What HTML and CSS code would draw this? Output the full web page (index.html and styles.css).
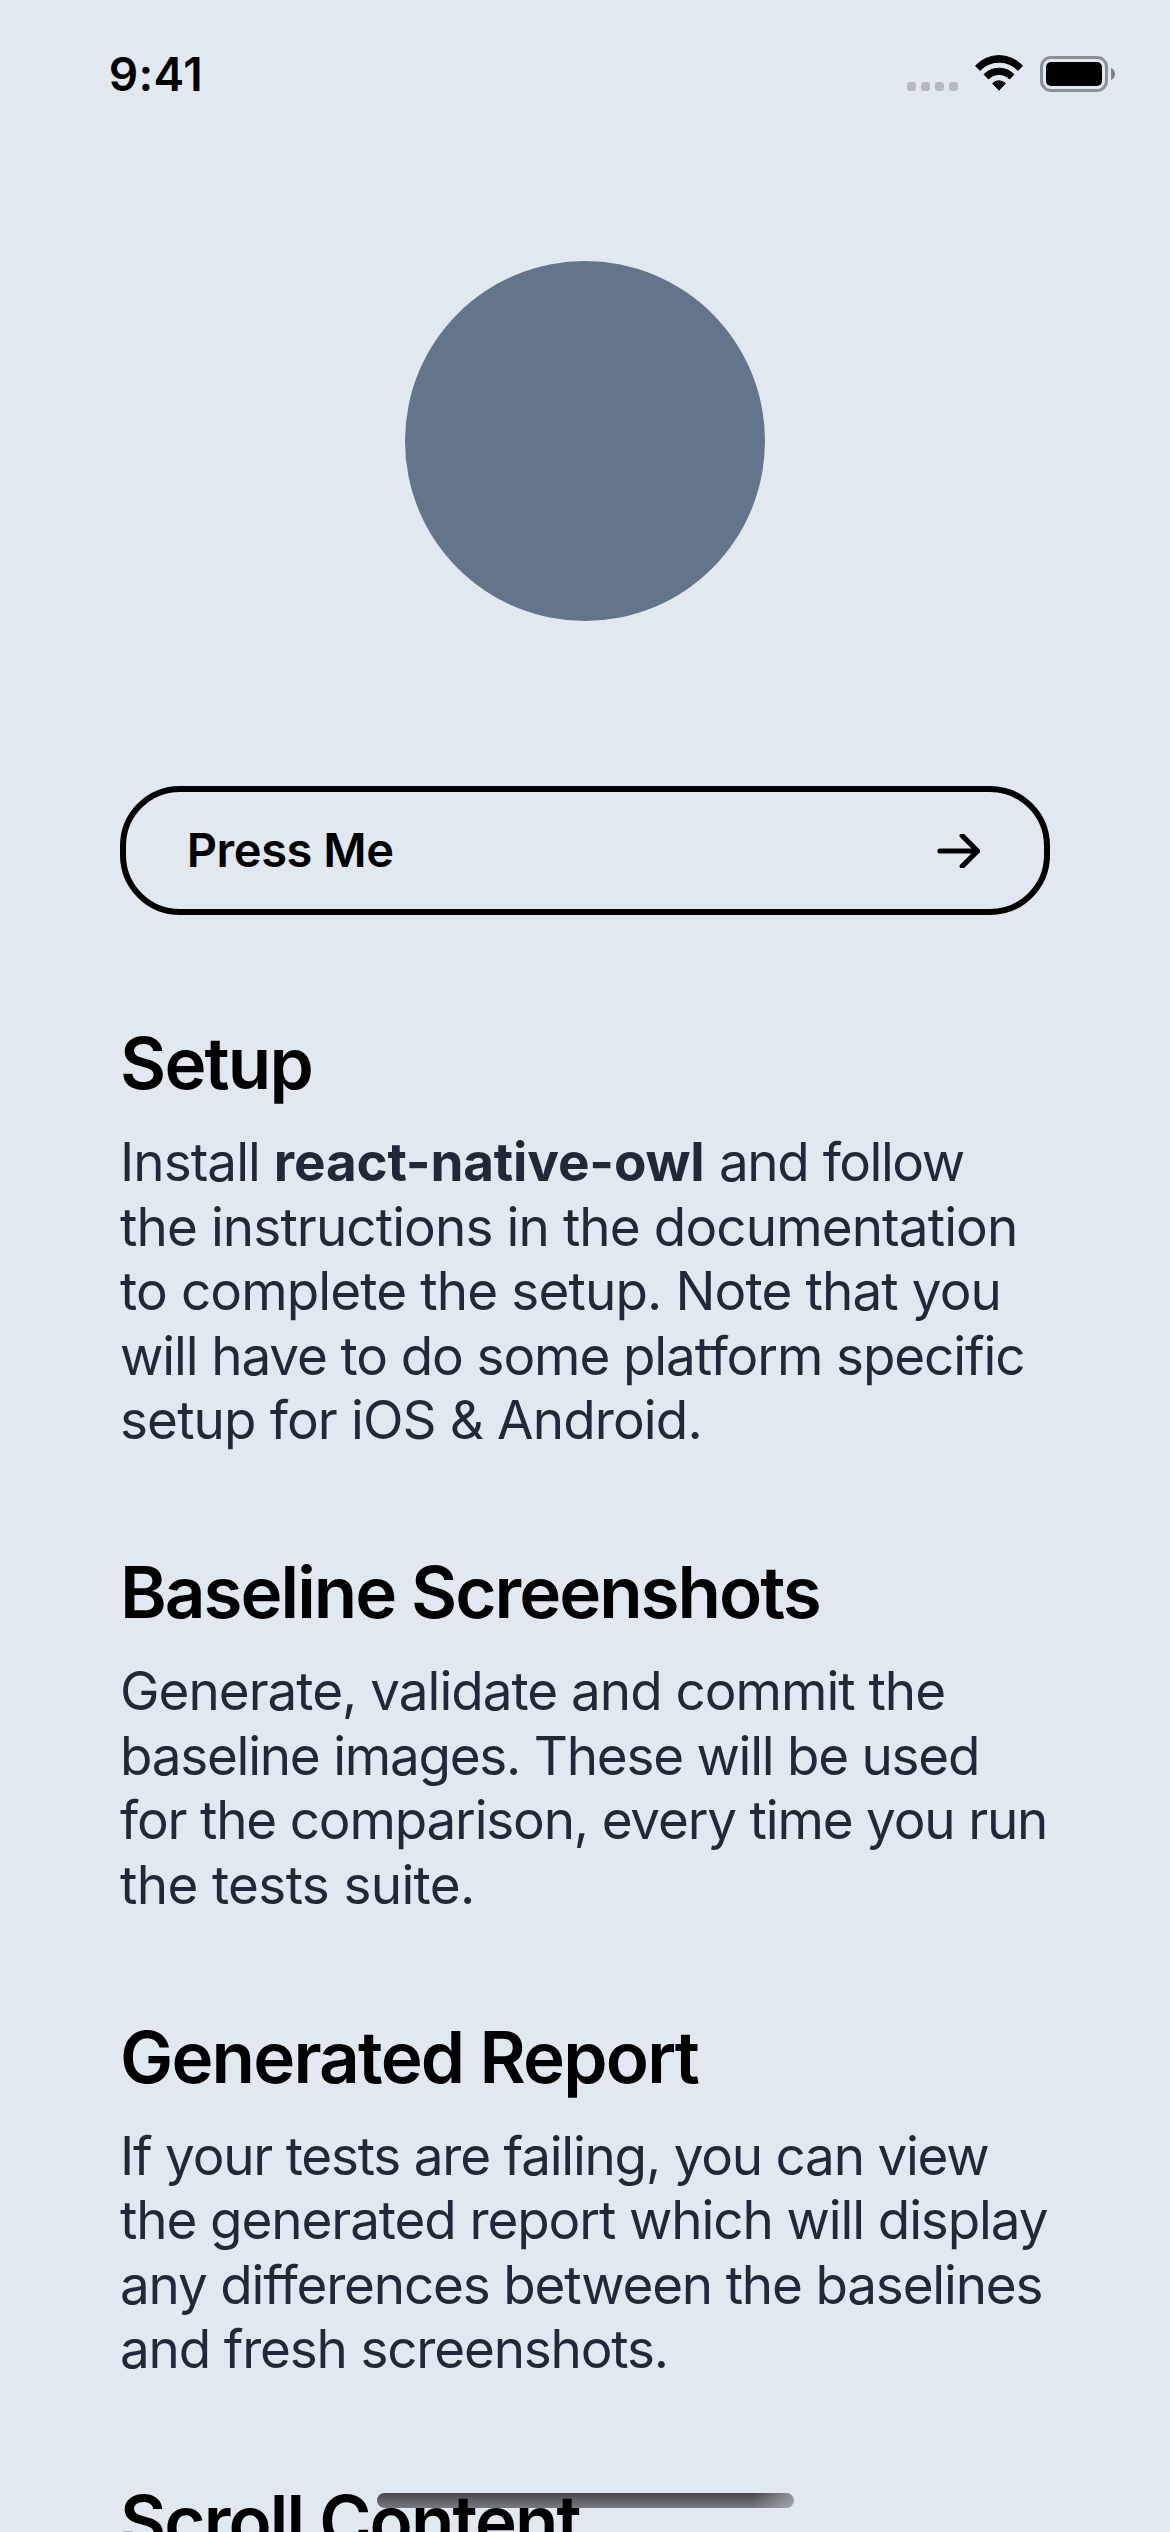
FILE: index.html
```html
<!DOCTYPE html>
<html lang="en">
<head>
<meta charset="utf-8">
<title>Owl</title>
<link rel="stylesheet" href="styles.css">
</head>
<body>
<div class="screen">
  <header class="status-bar">
    <span class="time">9:41</span>
    <svg class="status-icons" width="210" height="40" viewBox="906 53 210 40" aria-hidden="true">
      <g fill="#b5b8c0">
        <rect x="907" y="82" width="9" height="9" rx="3"/>
        <rect x="921" y="82" width="9" height="9" rx="3"/>
        <rect x="935" y="82" width="9" height="9" rx="3"/>
        <rect x="949" y="82" width="9" height="9" rx="3"/>
      </g>
      <g stroke="#000" stroke-width="1" stroke-linejoin="round">
        <path d="M975.5 65.8A32.2 32.2 0 0 1 1022.5 65.8L1018 70.4A26 26 0 0 0 980 70.4Z"/>
        <path d="M984 74.4A21.3 21.3 0 0 1 1014 74.4L1009.5 79A14.4 14.4 0 0 0 988.5 79Z"/>
        <path d="M992.6 83.4A9.2 9.2 0 0 1 1005.4 83.4L999 90.2Z"/>
      </g>
      <rect x="1041.5" y="57.5" width="65" height="33" rx="9.5" fill="none" stroke="#8b8f96" stroke-width="3"/>
      <rect x="1046" y="62" width="56" height="24" rx="5"/>
      <path d="M1111 68C1113.5 69 1115 71.3 1115 74S1113.5 79 1111 80Z" fill="#7d8086"/>
    </svg>
  </header>

  <main class="content">
    <div class="avatar"></div>

    <button class="press" type="button">
      <span class="label">Press Me</span>
      <svg width="44" height="34" viewBox="0 0 44 34" fill="none" stroke="#000" stroke-width="5.2" stroke-linecap="round" stroke-linejoin="round" aria-hidden="true">
        <path d="M3 17H40.5M25.2 1.7L40.5 17L25.2 32.3" transform="translate(1 0)"/>
      </svg>
    </button>

    <section class="section setup">
      <h2>Setup</h2>
      <p>
        <span class="line">Install <b>react-native-owl</b><span class="rest"> and follow</span></span>
        <span class="line">the instructions in the documentation</span>
        <span class="line">to complete the setup. Note that you</span>
        <span class="line">will have to do some platform specific</span>
        <span class="line">setup for iOS &amp; Android.</span>
      </p>
    </section>

    <section class="section baseline">
      <h2>Baseline Screenshots</h2>
      <p>
        <span class="line">Generate, validate and commit the</span>
        <span class="line">baseline images. These will be used</span>
        <span class="line">for the comparison, every time you run</span>
        <span class="line">the tests suite.</span>
      </p>
    </section>

    <section class="section report">
      <h2>Generated Report</h2>
      <p>
        <span class="line">If your tests are failing, you can view</span>
        <span class="line">the generated report which will display</span>
        <span class="line">any differences between the baselines</span>
        <span class="line">and fresh screenshots.</span>
      </p>
    </section>

    <section class="section">
      <h2>Scroll Content</h2>
    </section>
  </main>

  <div class="home-indicator"></div>
</div>
</body>
</html>
```
FILE: styles.css
```css
* { box-sizing: border-box; }

body {
  margin: 0;
  background: #e2e8f0;
  font-family: Inter, "Liberation Sans", sans-serif;
  color: #000;
}

.screen {
  position: relative;
  isolation: isolate;
  width: 1170px;
  height: 2532px;
  overflow: hidden;
}

.status-bar {
  display: flex;
  justify-content: space-between;
  align-items: flex-start;
  height: 141px;
  padding: 53px 54px 0 108.7px;
}

.time {
  margin-top: -6px;
  font-size: 46px;
  line-height: 54px;
  font-weight: 600;
  letter-spacing: 0.4px;
}

.status-icons { display: block; }

.content {
  display: flex;
  flex-direction: column;
  padding: 120px 120px 0;
}

.avatar {
  align-self: center;
  width: 360px;
  height: 360px;
  border-radius: 50%;
  background: #64748b;
}

.press {
  display: flex;
  justify-content: space-between;
  align-items: center;
  height: 129px;
  margin: 165px 0 105px;
  padding: 0 64px 0 60.7px;
  border: 6px solid #000;
  border-radius: 60px;
  background: none;
  color: #000;
  font: 600 47px/58px Inter, "Liberation Sans", sans-serif;
  letter-spacing: -0.43px;
}

.label { padding-bottom: 2px; }

.section { margin-bottom: 96.5px; }

h2 {
  margin: 0 0 24px;
  font-size: 71px;
  line-height: 86px;
  font-weight: 600;
  letter-spacing: -1.9px;
  white-space: nowrap;
}

.baseline h2 { letter-spacing: -2px; }
.setup h2,
.report h2 { letter-spacing: -1.8px; }

p {
  margin: 0;
  font-size: 53px;
  line-height: 64.5px;
  color: #1f2937;
}

.line {
  display: block;
  white-space: nowrap;
}

.setup .line:nth-child(1) { letter-spacing: -0.95px; }
.setup .line:nth-child(2) { letter-spacing: -0.89px; }
.setup .line:nth-child(3) { letter-spacing: -0.87px; }
.setup .line:nth-child(4) { letter-spacing: -1.11px; }
.setup .line:nth-child(5) { letter-spacing: -0.87px; }
.baseline .line:nth-child(1) { letter-spacing: -1px; }
.baseline .line:nth-child(2) { letter-spacing: -1.25px; }
.baseline .line:nth-child(3) { letter-spacing: -1.18px; }
.baseline .line:nth-child(4) { letter-spacing: -0.65px; }
.report .line:nth-child(1) { letter-spacing: -1.22px; }
.report .line:nth-child(2) { letter-spacing: -1.1px; }
.report .line:nth-child(3) { letter-spacing: -1.18px; }
.report .line:nth-child(4) { letter-spacing: -1.18px; }

.setup b { font-weight: 700; letter-spacing: -0.18px; }
.setup .rest { letter-spacing: -1.45px; word-spacing: 1px; }

.home-indicator {
  position: absolute;
  z-index: -1;
  left: 377px;
  top: 2493px;
  width: 417px;
  height: 15px;
  border-radius: 7.5px;
  background:
    linear-gradient(100deg, rgba(170, 174, 180, 0) 90%, rgba(170, 174, 180, 0.8) 100%),
    linear-gradient(#46474b, #777a7e);
}
```
